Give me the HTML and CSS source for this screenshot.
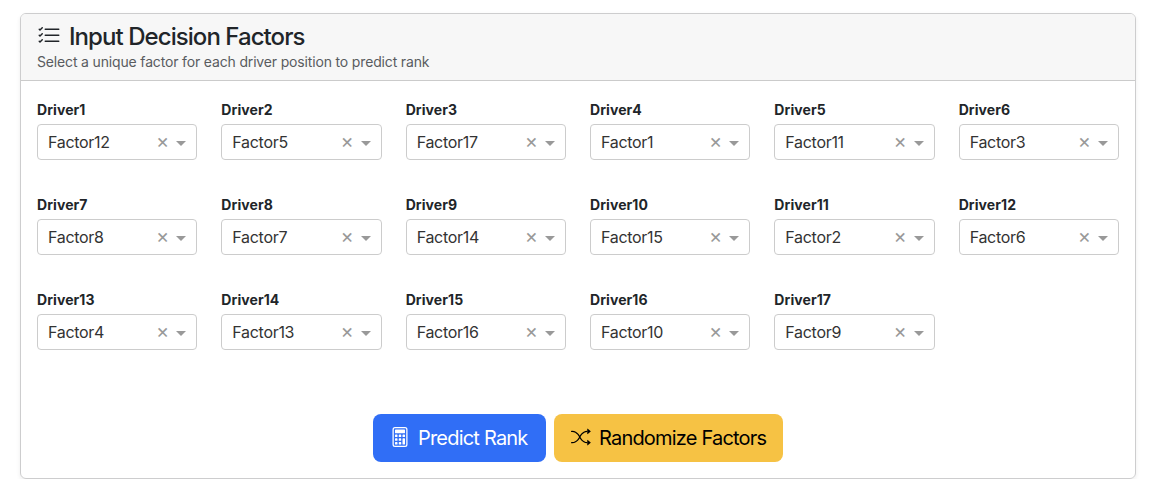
FILE: index.html
```html
<!DOCTYPE html>
<html lang="en">
<head>
<meta charset="utf-8">
<title>Input Decision Factors</title>
<link rel="stylesheet" href="styles.css">
</head>
<body>
<main class="card">
  <header class="card-header">
    <h1 class="title"><svg class="title-icon" viewBox="0 0 16 16" fill="currentColor"><path fill-rule="evenodd" d="M5 11.5a.5.5 0 0 1 .5-.5h9a.5.5 0 0 1 0 1h-9a.5.5 0 0 1-.5-.5m0-4a.5.5 0 0 1 .5-.5h9a.5.5 0 0 1 0 1h-9a.5.5 0 0 1-.5-.5m0-4a.5.5 0 0 1 .5-.5h9a.5.5 0 0 1 0 1h-9a.5.5 0 0 1-.5-.5M3.854 2.146a.5.5 0 0 1 0 .708l-1.5 1.5a.5.5 0 0 1-.708 0l-.5-.5a.5.5 0 1 1 .708-.708L2 3.293l1.146-1.147a.5.5 0 0 1 .708 0m0 4a.5.5 0 0 1 0 .708l-1.5 1.5a.5.5 0 0 1-.708 0l-.5-.5a.5.5 0 1 1 .708-.708L2 7.293l1.146-1.147a.5.5 0 0 1 .708 0m0 4a.5.5 0 0 1 0 .708l-1.5 1.5a.5.5 0 0 1-.708 0l-.5-.5a.5.5 0 0 1 .708-.708l.146.147 1.146-1.147a.5.5 0 0 1 .708 0"/></svg><span>Input Decision Factors</span></h1>
    <p class="subtitle"><span>Select a unique factor for each driver position to predict rank</span></p>
  </header>
  <div class="card-body">
    <section class="grid">
      <div class="field"><label class="label">Driver1</label><div class="select"><span class="value">Factor12</span><span class="clear">×</span><span class="caret"></span></div></div>
      <div class="field"><label class="label">Driver2</label><div class="select"><span class="value">Factor5</span><span class="clear">×</span><span class="caret"></span></div></div>
      <div class="field"><label class="label">Driver3</label><div class="select"><span class="value">Factor17</span><span class="clear">×</span><span class="caret"></span></div></div>
      <div class="field"><label class="label">Driver4</label><div class="select"><span class="value">Factor1</span><span class="clear">×</span><span class="caret"></span></div></div>
      <div class="field"><label class="label">Driver5</label><div class="select"><span class="value">Factor11</span><span class="clear">×</span><span class="caret"></span></div></div>
      <div class="field"><label class="label">Driver6</label><div class="select"><span class="value">Factor3</span><span class="clear">×</span><span class="caret"></span></div></div>
      <div class="field"><label class="label">Driver7</label><div class="select"><span class="value">Factor8</span><span class="clear">×</span><span class="caret"></span></div></div>
      <div class="field"><label class="label">Driver8</label><div class="select"><span class="value">Factor7</span><span class="clear">×</span><span class="caret"></span></div></div>
      <div class="field"><label class="label">Driver9</label><div class="select"><span class="value">Factor14</span><span class="clear">×</span><span class="caret"></span></div></div>
      <div class="field"><label class="label">Driver10</label><div class="select"><span class="value">Factor15</span><span class="clear">×</span><span class="caret"></span></div></div>
      <div class="field"><label class="label">Driver11</label><div class="select"><span class="value">Factor2</span><span class="clear">×</span><span class="caret"></span></div></div>
      <div class="field"><label class="label">Driver12</label><div class="select"><span class="value">Factor6</span><span class="clear">×</span><span class="caret"></span></div></div>
      <div class="field"><label class="label">Driver13</label><div class="select"><span class="value">Factor4</span><span class="clear">×</span><span class="caret"></span></div></div>
      <div class="field"><label class="label">Driver14</label><div class="select"><span class="value">Factor13</span><span class="clear">×</span><span class="caret"></span></div></div>
      <div class="field"><label class="label">Driver15</label><div class="select"><span class="value">Factor16</span><span class="clear">×</span><span class="caret"></span></div></div>
      <div class="field"><label class="label">Driver16</label><div class="select"><span class="value">Factor10</span><span class="clear">×</span><span class="caret"></span></div></div>
      <div class="field"><label class="label">Driver17</label><div class="select"><span class="value">Factor9</span><span class="clear">×</span><span class="caret"></span></div></div>
    </section>
    <div class="actions">
      <button class="btn btn-primary" type="button"><svg class="btn-icon" viewBox="0 0 16 16" fill="currentColor"><path d="M12 1a1 1 0 0 1 1 1v12a1 1 0 0 1-1 1H4a1 1 0 0 1-1-1V2a1 1 0 0 1 1-1zM4 0a2 2 0 0 0-2 2v12a2 2 0 0 0 2 2h8a2 2 0 0 0 2-2V2a2 2 0 0 0-2-2z"/><path d="M4 2.5a.5.5 0 0 1 .5-.5h7a.5.5 0 0 1 .5.5v2a.5.5 0 0 1-.5.5h-7a.5.5 0 0 1-.5-.5zm0 4a.5.5 0 0 1 .5-.5h1a.5.5 0 0 1 .5.5v1a.5.5 0 0 1-.5.5h-1a.5.5 0 0 1-.5-.5zm0 3a.5.5 0 0 1 .5-.5h1a.5.5 0 0 1 .5.5v1a.5.5 0 0 1-.5.5h-1a.5.5 0 0 1-.5-.5zm0 3a.5.5 0 0 1 .5-.5h1a.5.5 0 0 1 .5.5v1a.5.5 0 0 1-.5.5h-1a.5.5 0 0 1-.5-.5zm3-6a.5.5 0 0 1 .5-.5h1a.5.5 0 0 1 .5.5v1a.5.5 0 0 1-.5.5h-1a.5.5 0 0 1-.5-.5zm0 3a.5.5 0 0 1 .5-.5h1a.5.5 0 0 1 .5.5v1a.5.5 0 0 1-.5.5h-1a.5.5 0 0 1-.5-.5zm0 3a.5.5 0 0 1 .5-.5h1a.5.5 0 0 1 .5.5v1a.5.5 0 0 1-.5.5h-1a.5.5 0 0 1-.5-.5zm3-6a.5.5 0 0 1 .5-.5h1a.5.5 0 0 1 .5.5v1a.5.5 0 0 1-.5.5h-1a.5.5 0 0 1-.5-.5zm0 3a.5.5 0 0 1 .5-.5h1a.5.5 0 0 1 .5.5v4a.5.5 0 0 1-.5.5h-1a.5.5 0 0 1-.5-.5z"/></svg><span>Predict Rank</span></button>
      <button class="btn btn-warning" type="button"><svg class="btn-icon" viewBox="0 0 16 16" fill="currentColor"><path fill-rule="evenodd" d="M0 3.5A.5.5 0 0 1 .5 3H1c2.202 0 3.827 1.24 4.874 2.418.49.552.865 1.102 1.126 1.532.26-.43.636-.98 1.126-1.532C9.173 4.24 10.798 3 13 3v1c-1.798 0-3.173 1.01-4.126 2.082A9.6 9.6 0 0 0 7.556 8a9.6 9.6 0 0 0 1.317 1.918C9.828 10.99 11.204 12 13 12v1c-2.202 0-3.827-1.24-4.874-2.418A10.6 10.6 0 0 1 7 9.05c-.26.43-.636.98-1.126 1.532C4.827 11.76 3.202 13 1 13H.5a.5.5 0 0 1 0-1H1c1.798 0 3.173-1.01 4.126-2.082A9.6 9.6 0 0 0 6.444 8a9.6 9.6 0 0 0-1.317-1.918C4.172 5.01 2.796 4 1 4H.5a.5.5 0 0 1-.5-.5"/><path d="M13 5.466V1.534a.25.25 0 0 1 .41-.192l2.36 1.966c.12.1.12.284 0 .384l-2.36 1.966a.25.25 0 0 1-.41-.192m0 9v-3.932a.25.25 0 0 1 .41-.192l2.36 1.966c.12.1.12.284 0 .384l-2.36 1.966a.25.25 0 0 1-.41-.192"/></svg><span>Randomize Factors</span></button>
    </div>
  </div>
</main>
</body>
</html>
```
FILE: styles.css
```css
* { box-sizing: border-box; }
body {
  margin: 0;
  padding: 13px 14px 0 20px;
  background: #fff;
  color: #212529;
  font-family: Inter, "Liberation Sans", sans-serif;
  font-size: 16px;
}
.card {
  height: 466px;
  border: 1px solid #cdcdce;
  border-radius: 6px;
  box-shadow: 0 2px 4px rgba(0, 0, 0, .075);
  overflow: hidden;
}
.card-header {
  height: 67px;
  padding: 8px 16px;
  border-bottom: 1px solid #cbcbcb;
  background: #f7f7f7;
}
.title {
  display: flex;
  align-items: center;
  gap: 8px;
  margin: 0;
  font-size: 24px;
  line-height: 29px;
  font-weight: 500;
  letter-spacing: -.94px;
}
.title-icon { width: 24px; height: 24px; margin-bottom: 2px; }
.subtitle {
  margin: 0;
  font-size: 14px;
  line-height: 21px;
  letter-spacing: -.16px;
  color: #595c5f;
}
.card-body { padding: 18px 16px 0; }
.grid {
  display: grid;
  grid-template-columns: repeat(6, 1fr);
  grid-auto-rows: 61px;
  gap: 34px 24px;
}
.field { display: flex; flex-direction: column; }
.label {
  height: 25px;
  font-size: 14px;
  line-height: 21px;
  font-weight: 700;
  letter-spacing: .08px;
}
.select {
  display: flex;
  align-items: center;
  height: 36px;
  padding: 0 10px;
  border: 1px solid #ccc;
  border-radius: 4px;
  color: #333;
}
.value { flex: 1; letter-spacing: -.3px; }
.clear { color: #999; font-size: 20px; line-height: 32px; margin: 0 7px 2px 0; }
.caret {
  margin-top: 2px;
  border: 5px solid transparent;
  border-top-color: #999;
  border-bottom-width: 0;
}
.actions {
  display: flex;
  justify-content: center;
  gap: 8px;
  margin-top: 64px;
}
.btn {
  display: flex;
  align-items: center;
  gap: 8px;
  height: 48px;
  padding: 0 0 0 17px;
  border: 0;
  border-radius: 8px;
  font: 400 20px/30px Inter, "Liberation Sans", sans-serif;
  letter-spacing: -.8px;
  white-space: nowrap;
}
.btn-icon { width: 20px; height: 20px; margin-bottom: 2px; }
.btn-primary { width: 173px; background: #306ef6; color: #fff; }
.btn-warning { width: 229px; background: #f6c244; color: #000; }
```
